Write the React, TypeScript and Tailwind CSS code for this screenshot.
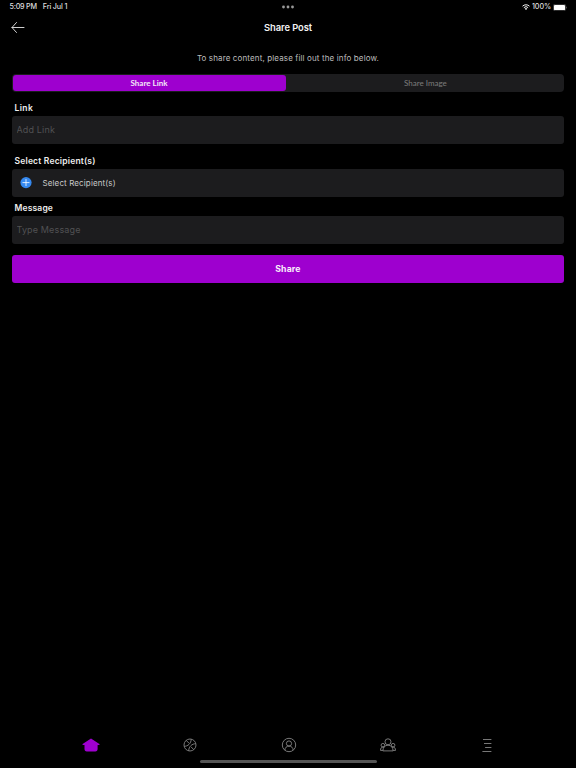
import * as React from 'react';
import { Tab, TabGroup, TabList } from '@headlessui/react';

function StatusBar() {
    return (
        <div className="grid h-3.5 grid-cols-3 items-center pl-[9.5px] pr-[9px] text-[7.2px] leading-[14px] text-[#dedede]">
            <div className="flex gap-x-[6px] whitespace-nowrap font-medium">
                <span className="tracking-[-0.22px]">5:09 PM</span>
                <span className="tracking-[-0.16px]">Fri Jul 1</span>
            </div>

            <div className="flex items-center justify-center">
                <svg width="12" height="4" viewBox="0 0 12 4" fill="#9a9a9a">
                    <circle cx="1.5" cy="2" r="1.4" />
                    <circle cx="6" cy="2" r="1.4" />
                    <circle cx="10.5" cy="2" r="1.4" />
                </svg>
            </div>

            <div className="flex items-center justify-end whitespace-nowrap">
                <svg width="8" height="6" viewBox="0 0 16 12" fill="none" stroke="#f0f0f0" strokeWidth="2">
                    <path d="M1 4.4a10 10 0 0 1 14 0" />
                    <path d="M3.7 7.3a6.1 6.1 0 0 1 8.6 0" />
                    <path d="M8 12 5.4 9.4a3.7 3.7 0 0 1 5.2 0Z" fill="#f0f0f0" stroke="none" />
                </svg>
                <span className="ml-[2px] mr-[2px] font-medium tracking-[-0.1px]">100%</span>
                <svg width="14" height="7" viewBox="0 0 14 7">
                    <rect x="0.25" y="0.25" width="12.5" height="6.5" rx="1.8" fill="none" stroke="#777777" strokeWidth="0.5" />
                    <rect x="0.9" y="0.9" width="11.2" height="5.2" rx="1.2" fill="#ffffff" />
                    <path d="M13.3 2.4v2.2c.9-.3.9-1.9 0-2.2Z" fill="#777777" />
                </svg>
            </div>
        </div>
    );
}

function Header() {
    return (
        <header className="grid h-7 grid-cols-3 items-center px-[11px]">
            <button type="button" aria-label="Back">
                <svg width="14" height="12" viewBox="0 0 14 12" fill="none" stroke="#e6e6e6" strokeWidth="0.9" strokeLinecap="round" strokeLinejoin="round">
                    <path d="M13 5.5H1M5.5.5 1 5.5l4.5 5" />
                </svg>
            </button>

            <h1 className="text-center text-[9.4px] font-semibold leading-3 tracking-[-0.08px] text-[#f2f2f2]">
                Share Post
            </h1>
        </header>
    );
}

const tabClasses = 'rounded-[3px] font-[Lato,sans-serif] text-[8px] font-normal leading-none text-[#7c7c7c] outline-none data-[selected]:bg-[#9e00cf] data-[selected]:font-bold data-[selected]:text-[#f4e8f8]';

function ShareTabs() {
    return (
        <TabGroup>
            <TabList className="grid h-[18px] grid-cols-[273px_1fr] rounded-[4px] bg-[#1c1c1e] p-px">
                <Tab className={tabClasses}>Share Link</Tab>
                <Tab className={`${tabClasses} pl-[2px]`}>Share Image</Tab>
            </TabList>
        </TabGroup>
    );
}

const labelClasses = 'block pl-[3px] text-[8.5px] font-semibold leading-[10px] text-[#eeeeee]';

const fieldClasses = 'block h-7 w-full rounded-[3px] bg-[#1c1c1e] pl-[5px] text-[9px] tracking-[0.15px] text-white outline-none placeholder:text-[#515153]';

function ShareForm() {
    const [link, setLink] = React.useState<string>('');

    const [message, setMessage] = React.useState<string>('');

    return (
        <form className="flex flex-col">
            <label htmlFor="link" className={`${labelClasses} mt-[11px] tracking-[0.4px]`}>
                Link
            </label>
            <input
                id="link"
                className={`${fieldClasses} mt-[3px] pb-px`}
                placeholder="Add Link"
                value={link}
                onChange={(e) => setLink(e.target.value)}
            />

            <span className={`${labelClasses} mt-[11.5px] tracking-[0.2px]`}>
                Select Recipient(s)
            </span>
            <button
                type="button"
                className="mt-[3px] flex h-7 items-center rounded-[3px] bg-[#1c1c1e] pl-2 text-[8px] tracking-[0.12px] text-[#c9c9c9]"
            >
                <svg className="mr-[11px]" width="12" height="12" viewBox="0 0 12 12">
                    <circle cx="6" cy="5.6" r="5.6" fill="#3589f0" />
                    <path d="M6 2.5v6.2M2.9 5.6h6.2" stroke="#ffffff" strokeWidth="0.8" strokeLinecap="round" />
                </svg>
                Select Recipient(s)
            </button>

            <label htmlFor="message" className={`${labelClasses} mt-[6px] tracking-[0.16px]`}>
                Message
            </label>
            <input
                id="message"
                className={`${fieldClasses} mt-[3px]`}
                placeholder="Type Message"
                value={message}
                onChange={(e) => setMessage(e.target.value)}
            />

            <button
                type="button"
                className="mt-[11px] h-7 rounded-[3px] bg-[#9e00cf] pt-[2px] text-[8.7px] font-bold tracking-[0.15px] text-[#f8eefb]"
            >
                Share
            </button>
        </form>
    );
}

function BottomNav() {
    return (
        <nav className="grid h-5 grid-cols-5 items-center justify-items-center pl-[41px] pr-[40px] text-[#858585]">
            <svg width="18" height="14" viewBox="0 0 18 14" fill="#9e00cf">
                <path d="M9 .5 17.4 6c.5.6.1 1-.6.9h-1.2v4.2c0 1.5-.8 2.4-2.3 2.4H4.8c-1.5 0-2.3-.9-2.3-2.4V6.9H1.2c-.7.1-1.1-.3-.6-.9Z" />
            </svg>

            <svg width="14" height="14" viewBox="0 0 14 14" fill="none" stroke="currentColor" strokeWidth="0.9">
                <circle cx="7" cy="7" r="6" />
                <path d="M1.2 8.3C4.8 8.4 8.1 5.5 8.2 1.2M5.7 12.8C5.8 8.5 9 5.7 12.8 5.7M3.2 2.4l3 3M8 8.8l2.8 2.9" />
            </svg>

            <svg width="16" height="16" viewBox="0 0 16 16" fill="none" stroke="currentColor" strokeWidth="0.9">
                <circle cx="8" cy="8" r="6.7" />
                <circle cx="8" cy="6.5" r="2.6" />
                <path d="M3.9 13.2c0-2.5 1.7-4.1 4.1-4.1s4.1 1.6 4.1 4.1" />
            </svg>

            <svg width="16" height="14" viewBox="0 0 16 14" fill="none" stroke="currentColor" strokeWidth="0.9">
                <circle cx="8" cy="3.8" r="3" />
                <path d="M2.9 12.9c.1-3.5 2-5.7 5.1-5.7s5 2.2 5.1 5.7Z" />
                <circle cx="2.9" cy="7.2" r="1.8" />
                <circle cx="13.1" cy="7.2" r="1.8" />
                <path d="M2.9 12.4H.5c0-2 .8-3.4 2.4-3.4l1.1.3M13.1 12.4h2.4c0-2-.8-3.4-2.4-3.4l-1.1.3" />
            </svg>

            <svg className="ml-px" width="10" height="14" viewBox="0 0 10 14" fill="none" stroke="currentColor" strokeWidth="0.9">
                <path d="M1 1.5h8.4M2 5.5h7.4M3.1 9.5h6.3M.4 13.5h9" />
            </svg>
        </nav>
    );
}

export default function App() {
    return (
        <div className="flex h-screen w-full flex-col bg-black font-[Inter,sans-serif]">
            <StatusBar />

            <Header />

            <main className="flex flex-1 flex-col pl-[11.5px] pr-[11.6px]">
                <p className="mb-[10px] mt-[10px] text-center text-[8px] leading-3 tracking-[0.13px] text-[#bdbdbd]">
                    To share content, please fill out the info below.
                </p>

                <ShareTabs />

                <ShareForm />
            </main>

            <BottomNav />

            <div className="mb-[5px] mt-[5px] h-[3px] w-[177px] self-center rounded-full bg-[#555555]" />
        </div>
    );
}
